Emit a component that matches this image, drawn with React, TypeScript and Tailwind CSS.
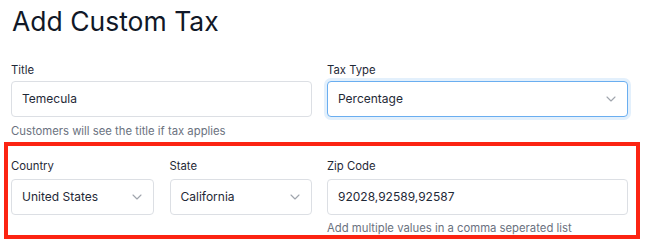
import React from 'react';

const font = { fontFamily: 'Inter, "Noto Sans", sans-serif' };

const Chevron = () => (
    <svg width="10" height="6" viewBox="0 0 10 6" fill="none" className="shrink-0">
        <path d="M1 1 L5 5 L9 1" stroke="#a0a5ad" strokeWidth="1.1" strokeLinecap="round" strokeLinejoin="round" />
    </svg>
);

const Label = ({ children, gap = 'mb-[3px]' }: { children: React.ReactNode; gap?: string }) => (
    <div className={`text-[11.3px] leading-[15px] text-[#1f2937] ${gap}`}>{children}</div>
);

const Hint = ({ children, className = '' }: { children: React.ReactNode; className?: string }) => (
    <div className={`text-[11.3px] leading-[14px] text-[#6b7280] ${className}`}>{children}</div>
);

const TextBox = ({ value }: { value: string }) => (
    <div className="h-[36px] flex items-center px-[10px] rounded-[4px] border border-[#dcdfe4] bg-white text-[12px] text-[#1f2937]">
        {value}
    </div>
);

const SelectBox = ({ value, focused }: { value: string; focused?: boolean }) => (
    <div
        className={`h-[36px] flex items-center justify-between pl-[10px] pr-[11px] rounded-[4px] bg-white text-[12px] text-[#1f2937] border ${
            focused ? 'border-[#6aaef0] ring-[3px] ring-[#e3f0fc]' : 'border-[#dcdfe4]'
        }`}
    >
        <span>{value}</span>
        <Chevron />
    </div>
);

const App = () => {
    return (
        <div className="w-[655px] h-[248px] bg-white overflow-hidden pt-[5px]" style={font}>
            <h1 className="pl-[12px] text-[26.5px] leading-[32px] font-normal text-[#111827]">Add Custom Tax</h1>

            <div className="mt-[26px] pl-[11px] pr-[27px] grid grid-cols-2 gap-x-[15px]">
                <div>
                    <Label>Title</Label>
                    <TextBox value="Temecula" />
                    <Hint className="mt-[7px]">Customers will see the title if tax applies</Hint>
                </div>
                <div>
                    <Label>Tax Type</Label>
                    <SelectBox value="Percentage" focused />
                </div>
            </div>

            {/* Highlighted location row */}
            <div className="mt-[4px] ml-[4px] w-[636px] border-[4px] border-[#fc2412] pl-[3px] pr-[8px] pt-[13px]">
                <div className="grid grid-cols-2 gap-x-[15px]">
                    <div className="grid grid-cols-2 gap-x-[16px]">
                        <div>
                            <Label gap="mb-[5px]">Country</Label>
                            <SelectBox value="United States" />
                        </div>
                        <div>
                            <Label gap="mb-[5px]">State</Label>
                            <SelectBox value="California" />
                        </div>
                    </div>
                    <div>
                        <Label gap="mb-[5px]">Zip Code</Label>
                        <TextBox value="92028,92589,92587" />
                        <Hint className="mt-[6px]">Add multiple values in a comma seperated list</Hint>
                    </div>
                </div>
            </div>
        </div>
    );
};

export default App;
